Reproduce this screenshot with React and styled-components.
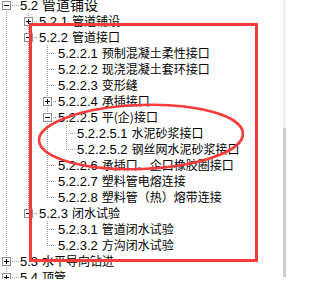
import React from 'react';
import styled, { createGlobalStyle } from 'styled-components';

const LINE = '#a0a0a0';
const RED = '#f83b3b';
const INDENT = 19;

const GlobalStyle = createGlobalStyle`
  html, body {
    margin: 0;
    padding: 0;
    background: #fff;
  }
  body {
    font-family: "Liberation Sans", "Noto Sans CJK SC", sans-serif;
    color: #000;
  }
`;

const tree = [
  { id: '5.2', title: '管道铺设', large: true, children: [
    { id: '5.2.1', title: '管道铺设', collapsed: true },
    { id: '5.2.2', title: '管道接口', children: [
      { id: '5.2.2.1', title: '预制混凝土柔性接口' },
      { id: '5.2.2.2', title: '现浇混凝土套环接口' },
      { id: '5.2.2.3', title: '变形缝' },
      { id: '5.2.2.4', title: '承插接口', collapsed: true },
      { id: '5.2.2.5', title: '平(企)接口', children: [
        { id: '5.2.2.5.1', title: '水泥砂浆接口' },
        { id: '5.2.2.5.2', title: '钢丝网水泥砂浆接口' },
      ] },
      { id: '5.2.2.6', title: '承插口、企口橡胶圈接口' },
      { id: '5.2.2.7', title: '塑料管电熔连接' },
      { id: '5.2.2.8', title: '塑料管（热）熔带连接' },
    ] },
    { id: '5.2.3', title: '闭水试验', children: [
      { id: '5.2.3.1', title: '管道闭水试验' },
      { id: '5.2.3.2', title: '方沟闭水试验' },
    ] },
  ] },
  { id: '5.3', title: '水平导向钻进', collapsed: true },
  { id: '5.4', title: '顶管', collapsed: true },
];

// walk the tree into flat rows, remembering which ancestor columns keep a line going
const flatten = (list, depth = 1, guides = []) =>
  list.flatMap((node, i) => {
    const last = i === list.length - 1;
    const row = { node, depth, guides, last };
    if (!node.children) return [row];
    return [row, ...flatten(node.children, depth + 1, [...guides, !last])];
  });

const dotsY = `repeating-linear-gradient(to bottom, ${LINE} 0 1px, transparent 1px 2px)`;
const dotsX = `repeating-linear-gradient(to right, ${LINE} 0 1px, transparent 1px 2px)`;

const centerOf = depth => (depth === 1 ? 6 : 9);

const Frame = styled.div`
  position: relative;
  display: flex;
  width: 287px;
  height: 279px;
  overflow: hidden;
`;

const Tree = styled.ul`
  flex: 0 0 283px;
  margin: -3px 0 0;
  padding: 0;
  list-style: none;
`;

const Row = styled.li`
  display: flex;
  align-items: center;
  height: 16px;
  white-space: nowrap;
`;

const Guide = styled.span`
  flex: 0 0 ${INDENT}px;
  height: 16px;
  background: ${p => (p.$on ? dotsY : 'none')};
  background-size: 1px 16px;
  background-position: ${p => p.$center}px 0;
  background-repeat: no-repeat;
`;

const Node = styled.span`
  flex: 0 0 ${INDENT}px;
  display: flex;
  align-items: center;
  height: 16px;
  background-image: ${dotsY}, ${p => (p.$more ? dotsY : 'none')}, ${dotsX};
  background-size: 1px 8px, 1px 8px, ${p => INDENT - p.$center}px 1px;
  background-position: ${p => `${p.$center}px 0, ${p.$center}px 8px, ${p.$center}px 8px`};
  background-repeat: no-repeat;
`;

const Expander = styled.svg`
  display: block;
  margin-left: ${p => p.$center - 4}px;
  shape-rendering: crispEdges;
`;

const Label = styled.span`
  display: flex;
  align-items: baseline;
  padding-left: 1px;
  line-height: 16px;
`;

const Num = styled.span`
  font-family: "Liberation Sans", sans-serif;
  font-size: 13px;
`;

const Title = styled.span`
  margin-left: 4px;
  font-family: "Noto Sans CJK SC", sans-serif;
  font-size: ${p => (p.$large ? '14px' : '12px')};
`;

const ScrollTrack = styled.div`
  display: flex;
  flex-direction: column;
  width: 3px;
  height: 277px;
  background: #f0f0f0;
`;

const Thumb = styled.div`
  margin-top: 128px;
  flex: 1;
  background: #cdcdcd;
`;

const Marker = styled.div`
  position: absolute;
  left: 29px;
  top: 23px;
  width: 229px;
  height: 239px;
  box-sizing: border-box;
  border: 3px solid ${RED};
  pointer-events: none;
`;

const Circle = styled.svg`
  position: absolute;
  left: 0;
  top: 0;
  pointer-events: none;
`;

const Box = ({ center, open }) => (
  <Expander $center={center} width="9" height="9" viewBox="0 0 9 9">
    <rect x="0.5" y="0.5" width="8" height="8" fill="#fff" stroke="#919191" />
    <path d="M2 4.5h5" stroke="#000" />
    {!open && <path d="M4.5 2v5" stroke="#000" />}
  </Expander>
);

const TreeRow = ({ node, depth, guides, last }) => {
  const center = centerOf(depth);
  const hasKids = node.children || node.collapsed;
  return (
    <Row>
      {guides.map((on, i) => (
        <Guide key={i} $on={on} $center={centerOf(i + 1)} />
      ))}
      <Node $center={center} $more={!last}>
        {hasKids && <Box center={center} open={!!node.children} />}
      </Node>
      <Label>
        <Num>{node.id}</Num>
        <Title $large={node.large}>{node.title}</Title>
      </Label>
    </Row>
  );
};

export default function App() {
  const rows = flatten(tree);
  return (
    <>
      <GlobalStyle />
      <Frame>
        <Tree>
          {rows.map(r => <TreeRow key={r.node.id} {...r} />)}
        </Tree>
        <ScrollTrack>
          <Thumb />
        </ScrollTrack>
        <Marker />
        <Circle width="287" height="279">
          <ellipse cx="141" cy="137" rx="102" ry="32" fill="none" stroke={RED} strokeWidth="2.6"
            transform="rotate(-2 141 137)" />
        </Circle>
      </Frame>
    </>
  );
}
